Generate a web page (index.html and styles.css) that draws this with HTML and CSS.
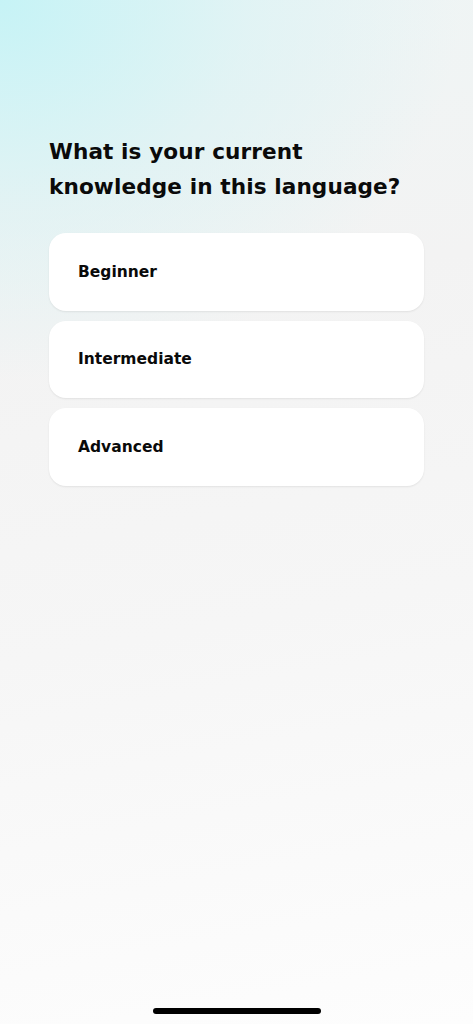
FILE: index.html
```html
<!DOCTYPE html>
<html lang="en">
<head>
  <meta charset="UTF-8">
  <meta name="viewport" content="width=device-width, initial-scale=1.0">
  <title>Knowledge Level</title>
  <link rel="stylesheet" href="styles.css">
</head>
<body>
  <main class="screen">
    <h1 class="question">What is your current knowledge in this language?</h1>

    <div class="options">
      <button class="option">Beginner</button>
      <button class="option">Intermediate</button>
      <button class="option">Advanced</button>
    </div>
  </main>

  <div class="home-bar"></div>
</body>
</html>
```

FILE: styles.css
```css
* { margin: 0; padding: 0; box-sizing: border-box; }

html, body { height: 100%; }

body {
  font-family: "DejaVu Sans", "Noto Sans", sans-serif;
  color: #0a0a0a;
  background:
    radial-gradient(ellipse 460px 380px at 0 0, rgba(196, 243, 246, 0.95), rgba(212, 242, 244, 0.5) 55%, rgba(240, 244, 244, 0) 100%),
    linear-gradient(170deg, #eef5f5 0%, #f3f3f3 30%, #f6f6f6 60%, #fdfdfd 100%);
  display: flex;
  flex-direction: column;
  height: 1024px;
  overflow: hidden;
}

.screen {
  flex: 1;
  padding: 134px 49px 0 49px;
}

.question {
  font-size: 21.6px;
  font-weight: bold;
  line-height: 35px;
  letter-spacing: 0.1px;
  width: 370px;
}

.options {
  display: flex;
  flex-direction: column;
  gap: 10px;
  margin-top: 29px;
}

.option {
  height: 77.5px;
  width: 375px;
  display: flex;
  align-items: center;
  padding: 0 29px;
  background: #fff;
  border: none;
  border-radius: 17px;
  box-shadow: 0 1px 2px rgba(0, 0, 0, 0.08);
  font-family: inherit;
  font-size: 15.5px;
  font-weight: bold;
  color: #0a0a0a;
  text-align: left;
  cursor: pointer;
}

.home-bar {
  width: 168px;
  height: 6px;
  border-radius: 3px;
  background: #000;
  margin: 0 auto 10px;
}
```
